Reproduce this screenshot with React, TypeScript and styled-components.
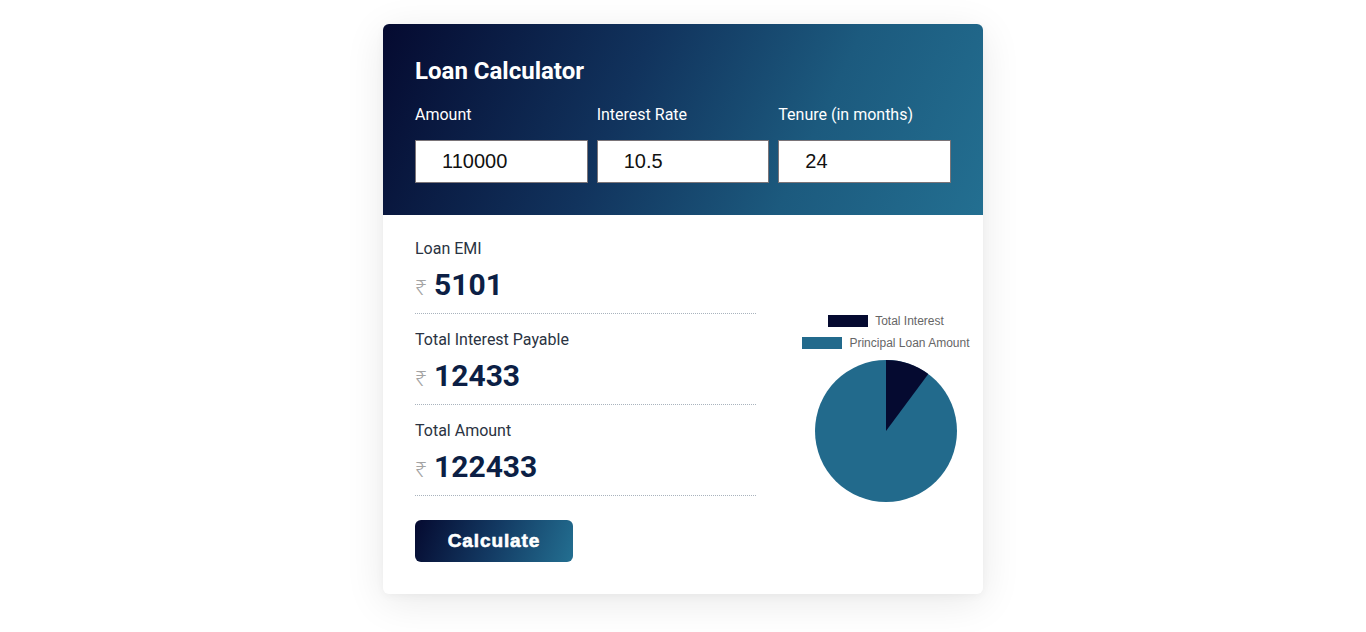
import React from 'react';
import styled, { createGlobalStyle } from 'styled-components';

const GlobalStyle = createGlobalStyle`
  html, body {
    margin: 0;
    padding: 0;
    background: #ffffff;
  }
  body {
    font-family: Roboto, "Liberation Sans", Arial, sans-serif;
  }
`;

const Page = styled.div`
  display: flex;
  justify-content: center;
  padding: 24px 0 38px;
`;

const Card = styled.div`
  width: 600px;
  background: #ffffff;
  border-radius: 6px;
  overflow: hidden;
  box-shadow: 0 8px 40px rgba(0, 0, 0, 0.09), 0 2px 8px rgba(0, 0, 0, 0.04);
`;

const Header = styled.div`
  padding: 32px 32px 32px;
  background: linear-gradient(115deg, #050a30 0%, #11335d 40%, #1c5a7e 70%, #236f91 100%);
  color: #ffffff;
`;

const Title = styled.h2`
  margin: 0;
  font-size: 24px;
  line-height: 30px;
  font-weight: 700;
`;

const Fields = styled.div`
  display: grid;
  grid-template-columns: repeat(3, 1fr);
  column-gap: 9px;
  margin-top: 19px;
`;

const Field = styled.label`
  display: flex;
  flex-direction: column;
`;

const FieldLabel = styled.span`
  font-size: 16px;
  line-height: 20px;
  margin-bottom: 15px;
`;

const Input = styled.input`
  box-sizing: border-box;
  width: 100%;
  height: 43px;
  padding: 0 0 0 26px;
  border: 1px solid #7a7478;
  background: #ffffff;
  font-family: "Liberation Sans", Arial, sans-serif;
  font-size: 20px;
  color: #111111;
  outline: none;
`;

const Body = styled.div`
  display: grid;
  grid-template-columns: 341px 1fr;
  column-gap: 33px;
  padding: 24px 0 32px 32px;
`;

const Results = styled.div`
  display: flex;
  flex-direction: column;
`;

const Row = styled.div<{ $first?: boolean }>`
  padding: ${({ $first }) => ($first ? '0' : '16px')} 0 10px;
  border-bottom: 1px dotted #a9b3bd;
`;

const RowLabel = styled.div`
  font-size: 16px;
  line-height: 20px;
  color: #2a3342;
`;

const Value = styled.div`
  display: flex;
  align-items: baseline;
  margin-top: 8px;
  height: 36px;
  line-height: 36px;
`;

const Rupee = styled.span`
  font-family: "Noto Sans", "DejaVu Sans", sans-serif;
  font-size: 21px;
  font-weight: 300;
  color: #a3a3a3;
  margin-right: 7px;
`;

const Amount = styled.span`
  font-size: 30px;
  font-weight: 700;
  color: #0c1f45;
`;

const Button = styled.button`
  align-self: flex-start;
  margin-top: 24px;
  width: 158px;
  height: 42px;
  border: none;
  border-radius: 6px;
  background: linear-gradient(110deg, #050a30 0%, #133a63 50%, #236f91 100%);
  color: #ffffff;
  font-family: "Liberation Sans", Arial, sans-serif;
  font-size: 19px;
  font-weight: 700;
  letter-spacing: 0.9px;
  -webkit-text-stroke: 0.6px #ffffff;
  cursor: pointer;
`;

const ChartCol = styled.div`
  display: flex;
  flex-direction: column;
  align-items: center;
  justify-content: center;
  padding-top: 16px;
`;

const Legend = styled.div`
  display: flex;
  flex-direction: column;
  align-items: center;
  gap: 10px;
  margin-bottom: 10px;
`;

const LegendItem = styled.div`
  display: flex;
  align-items: center;
  gap: 7px;
  font-family: "Liberation Sans", Arial, sans-serif;
  font-size: 12px;
  line-height: 12px;
  color: #666666;
`;

const Swatch = styled.span<{ $color: string }>`
  width: 40px;
  height: 12px;
  background: ${({ $color }) => $color};
`;

const INTEREST_COLOR = '#050a30';
const PRINCIPAL_COLOR = '#226a8c';

function Pie({ interest, principal }: { interest: number; principal: number }) {
  const r = 71;
  const c = 72;
  const frac = interest / (interest + principal);
  const a = frac * Math.PI * 2;
  const x = c + r * Math.sin(a);
  const y = c - r * Math.cos(a);
  const large = frac > 0.5 ? 1 : 0;
  return (
    <svg width={144} height={144} viewBox="0 0 144 144">
      <circle cx={c} cy={c} r={r} fill={PRINCIPAL_COLOR} />
      <path
        d={`M${c} ${c} L${c} ${c - r} A${r} ${r} 0 ${large} 1 ${x} ${y} Z`}
        fill={INTEREST_COLOR}
      />
    </svg>
  );
}

const results = [
  { label: 'Loan EMI', value: '5101' },
  { label: 'Total Interest Payable', value: '12433' },
  { label: 'Total Amount', value: '122433' },
];

export default function App() {
  return (
    <>
      <GlobalStyle />
      <Page>
        <Card>
          <Header>
            <Title>Loan Calculator</Title>
            <Fields>
              <Field>
                <FieldLabel>Amount</FieldLabel>
                <Input defaultValue="110000" />
              </Field>
              <Field>
                <FieldLabel>Interest Rate</FieldLabel>
                <Input defaultValue="10.5" />
              </Field>
              <Field>
                <FieldLabel>Tenure (in months)</FieldLabel>
                <Input defaultValue="24" />
              </Field>
            </Fields>
          </Header>
          <Body>
            <Results>
              {results.map((r, i) => (
                <Row key={r.label} $first={i === 0}>
                  <RowLabel>{r.label}</RowLabel>
                  <Value>
                    <Rupee>₹</Rupee>
                    <Amount>{r.value}</Amount>
                  </Value>
                </Row>
              ))}
              <Button>Calculate</Button>
            </Results>
            <ChartCol>
              <Legend>
                <LegendItem>
                  <Swatch $color={INTEREST_COLOR} />
                  Total Interest
                </LegendItem>
                <LegendItem>
                  <Swatch $color={PRINCIPAL_COLOR} />
                  Principal Loan Amount
                </LegendItem>
              </Legend>
              <Pie interest={12433} principal={110000} />
            </ChartCol>
          </Body>
        </Card>
      </Page>
    </>
  );
}
